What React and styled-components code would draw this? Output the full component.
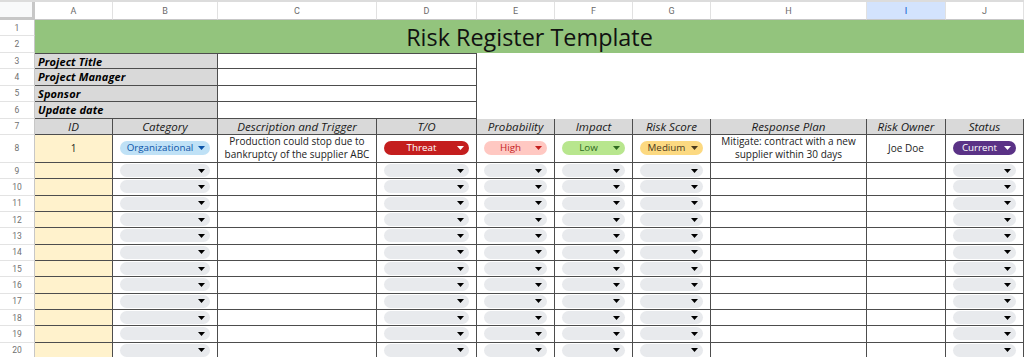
import React from "react";
import styled, { createGlobalStyle, css } from "styled-components";

const Global = createGlobalStyle`
  html, body { margin: 0; padding: 0; background: #ffffff; }
  body { font-family: "Open Sans", "Noto Sans", sans-serif; }
  * { box-sizing: border-box; }
`;

const COLS = "35px 78px 105px 159px 100px 78px 78px 78px 156px 79px 78px";
const ROWS = "18px repeat(7, 16.43px) 28px repeat(12, 16.33px)";
const LINE = "#4d4d4d";

const Sheet = styled.div`
  display: grid;
  grid-template-columns: ${COLS};
  grid-template-rows: ${ROWS};
  border-top: 2px solid #dcdcdc;
  width: 1024px;
  height: 357px;
  overflow: hidden;
  font-family: "Open Sans", "Noto Sans", sans-serif;
  color: #1f1f1f;
`;

const Corner = styled.div`
  background: #f8f9fa;
  border-right: 3px solid #c7c7c7;
  border-bottom: 3px solid #c7c7c7;
`;

const ColHead = styled.div`
  display: flex;
  align-items: center;
  justify-content: center;
  font-family: Roboto, "Liberation Sans", sans-serif;
  font-size: 9px;
  color: ${(p) => (p.$active ? "#0b57d0" : "#6b6b6b")};
  background: ${(p) => (p.$active ? "#d3e3fd" : "#ffffff")};
  border-right: 1px solid #e1e1e1;
  border-bottom: 1px solid #c7c7c7;
`;

const RowNum = styled.div`
  grid-column: 1;
  display: flex;
  align-items: center;
  justify-content: center;
  font-family: Roboto, "Liberation Sans", sans-serif;
  font-size: 8.5px;
  color: #707070;
  background: #ffffff;
  border-right: 1px solid #c7c7c7;
  border-bottom: 1px solid #e3e3e3;
`;

const Title = styled.div`
  grid-column: 2 / span 10;
  grid-row: span 2;
  background: #93c47d;
  display: flex;
  align-items: center;
  justify-content: center;
  font-family: "Open Sans", "Noto Sans", sans-serif;
  font-size: 23.4px;
  color: #111;
  padding-top: 1px;
`;

const Label = styled.div`
  grid-column: span 2;
  background: #d9d9d9;
  border-right: 1px solid ${LINE};
  border-bottom: 1px solid ${LINE};
  ${(p) => p.$first && css`border-top: 1px solid ${LINE};`}
  display: flex;
  align-items: center;
  padding-left: 3px;
  font-size: 11px;
  font-weight: 700;
  font-style: italic;
  letter-spacing: 0.1px;
  color: #000;
`;

const Input = styled.div`
  grid-column: span 2;
  background: #fff;
  border-right: 1px solid ${LINE};
  border-bottom: 1px solid ${LINE};
  ${(p) => p.$first && css`border-top: 1px solid ${LINE};`}
`;

const Blank = styled.div`
  grid-column: span 6;
  grid-row: span 4;
  background: #fff;
`;

const Head = styled.div`
  background: #d9d9d9;
  border-right: 1px solid ${LINE};
  border-bottom: 1px solid ${LINE};
  display: flex;
  align-items: center;
  justify-content: center;
  font-size: 11.6px;
  font-style: italic;
  color: #1a1a1a;
  white-space: nowrap;
  overflow: hidden;
`;

const Cell = styled.div`
  background: ${(p) => p.$bg || "#ffffff"};
  border-right: 1px solid ${LINE};
  border-bottom: 1px solid ${LINE};
  display: flex;
  align-items: center;
  justify-content: center;
  text-align: center;
  padding: 0 ${(p) => (p.$chip ? "7px 0 7px" : "2px")};
  font-size: 10px;
  line-height: 13px;
  color: #222;
  min-width: 0;
`;

const CHIP = {
  empty: { bg: "#e8eaed", fg: "#000" },
  blue: { bg: "#bfe1f6", fg: "#0a53a8" },
  threat: { bg: "#c41e1e", fg: "#ffffff" },
  high: { bg: "#ffc8c2", fg: "#c41e1e" },
  low: { bg: "#b8e68e", fg: "#2f6a1f" },
  medium: { bg: "#fcd981", fg: "#4a3a1c" },
  purple: { bg: "#5a3286", fg: "#ffffff" },
};

const Chip = styled.div`
  width: 100%;
  height: ${(p) => (p.$big ? 14 : 13)}px;
  border-radius: 7px;
  background: ${(p) => CHIP[p.$kind].bg};
  color: ${(p) => CHIP[p.$kind].fg};
  display: flex;
  align-items: center;
  padding: 0 5px;
  font-size: 9.8px;
  line-height: 14px;
`;

const ChipText = styled.span`
  flex: 1;
  text-align: center;
  white-space: nowrap;
`;

const Arrow = styled.svg`
  width: 7px;
  height: 4px;
  flex: none;
  margin-left: 3px;
  fill: currentColor;
`;

function Drop({ kind = "empty", label, big }) {
  return (
    <Chip $kind={kind} $big={big}>
      <ChipText>{label}</ChipText>
      <Arrow viewBox="0 0 7 4">
        <path d="M0 0H7L3.5 4Z" />
      </Arrow>
    </Chip>
  );
}

const letters = ["A", "B", "C", "D", "E", "F", "G", "H", "I", "J"];
const headers = [
  "ID",
  "Category",
  "Description and Trigger",
  "T/O",
  "Probability",
  "Impact",
  "Risk Score",
  "Response Plan",
  "Risk Owner",
  "Status",
];
const labels = ["Project Title", "Project Manager", "Sponsor", "Update date"];
const YELLOW = "#fff2cc";

export default function App() {
  const emptyRows = Array.from({ length: 12 }, (_, i) => i + 9);
  return (
    <>
      <Global />
      <Sheet>
        <Corner />
        {letters.map((l) => (
          <ColHead key={l} $active={l === "I"}>
            {l}
          </ColHead>
        ))}

        <RowNum>1</RowNum>
        <Title>Risk Register Template</Title>
        <RowNum>2</RowNum>

        {labels.map((lab, i) => (
          <React.Fragment key={lab}>
            <RowNum>{i + 3}</RowNum>
            <Label $first={i === 0}>{lab}</Label>
            <Input $first={i === 0} />
            {i === 0 && <Blank />}
          </React.Fragment>
        ))}

        <RowNum>7</RowNum>
        {headers.map((h) => (
          <Head key={h}>{h}</Head>
        ))}

        <RowNum>8</RowNum>
        <Cell $bg={YELLOW}>1</Cell>
        <Cell $chip>
          <Drop kind="blue" label="Organizational" big />
        </Cell>
        <Cell>
          Production could stop due to
          <br />
          bankruptcy of the supplier ABC
        </Cell>
        <Cell $chip>
          <Drop kind="threat" label="Threat" big />
        </Cell>
        <Cell $chip>
          <Drop kind="high" label="High" big />
        </Cell>
        <Cell $chip>
          <Drop kind="low" label="Low" big />
        </Cell>
        <Cell $chip>
          <Drop kind="medium" label="Medium" big />
        </Cell>
        <Cell>
          Mitigate: contract with a new
          <br />
          supplier within 30 days
        </Cell>
        <Cell>Joe Doe</Cell>
        <Cell $chip>
          <Drop kind="purple" label="Current" big />
        </Cell>

        {emptyRows.map((r) => (
          <React.Fragment key={r}>
            <RowNum>{r}</RowNum>
            <Cell $bg={YELLOW} />
            <Cell $chip>
              <Drop />
            </Cell>
            <Cell />
            <Cell $chip>
              <Drop />
            </Cell>
            <Cell $chip>
              <Drop />
            </Cell>
            <Cell $chip>
              <Drop />
            </Cell>
            <Cell $chip>
              <Drop />
            </Cell>
            <Cell />
            <Cell />
            <Cell $chip>
              <Drop />
            </Cell>
          </React.Fragment>
        ))}
      </Sheet>
    </>
  );
}
